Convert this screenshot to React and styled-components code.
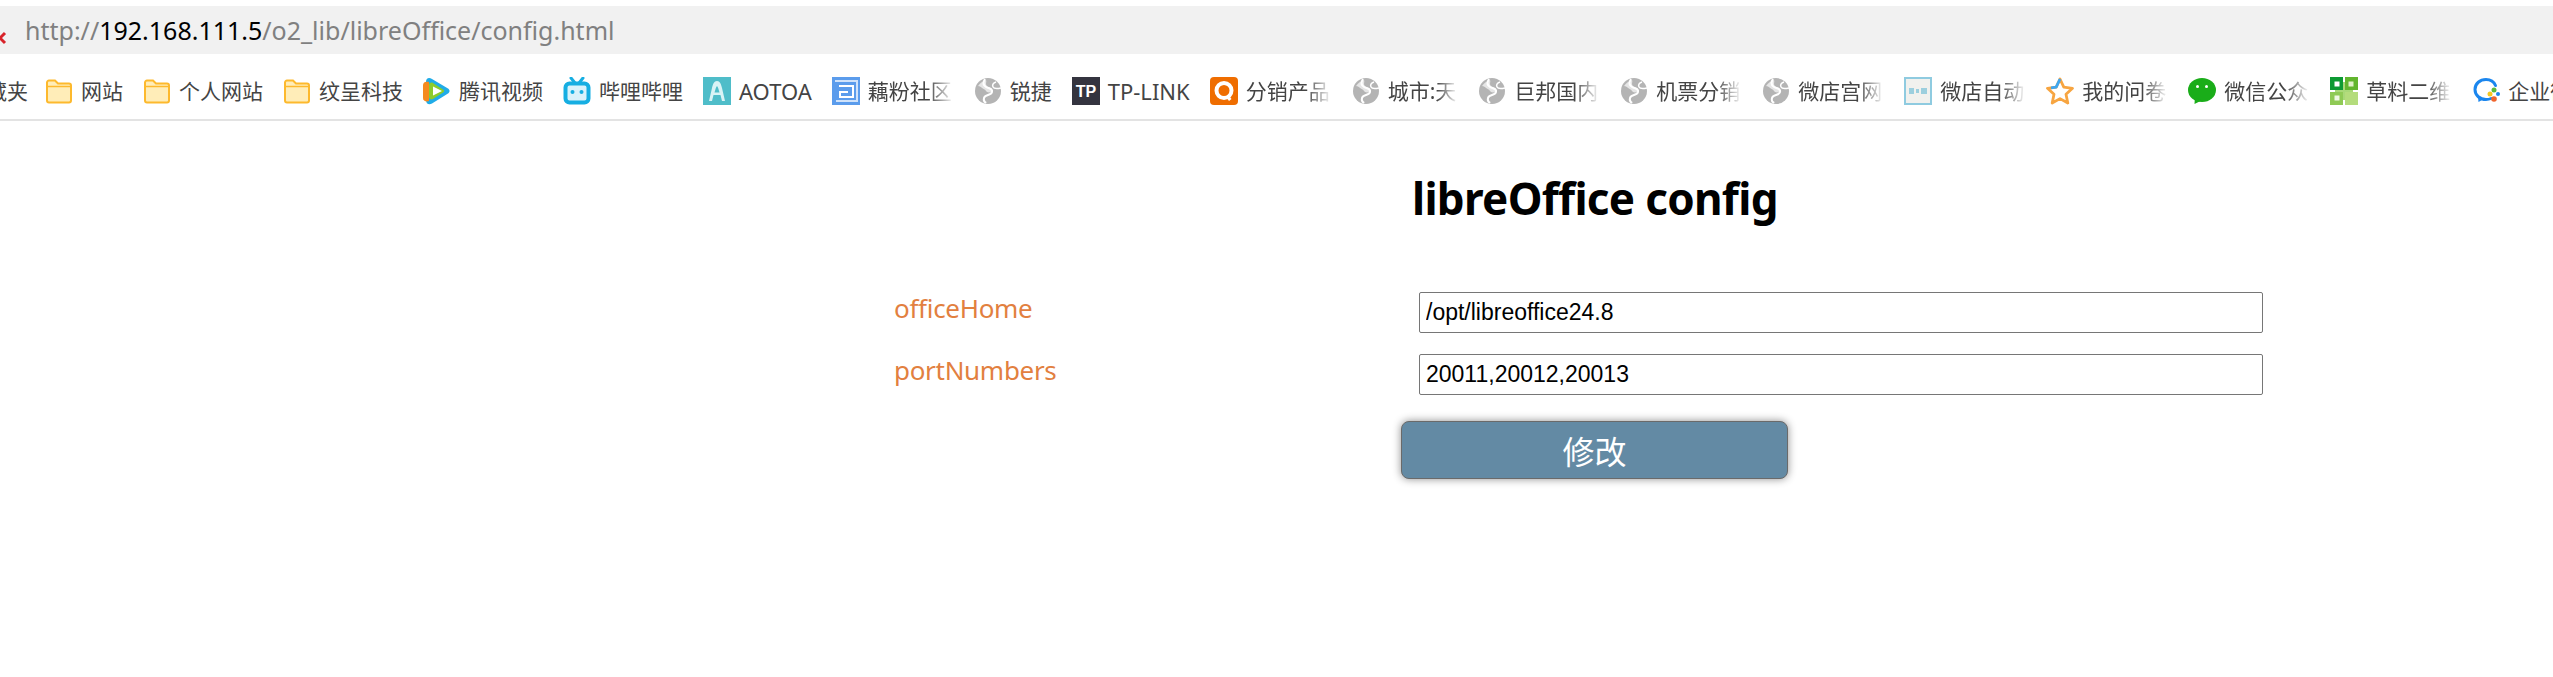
import React from 'react';
import styled, { createGlobalStyle } from 'styled-components';

const GlobalStyle = createGlobalStyle`
  html, body {
    margin: 0;
    background: #fff;
    font-family: "Noto Sans", "Noto Sans CJK SC", sans-serif;
  }
`;

const Page = styled.div`
  width: 2553px;
  height: 677px;
  overflow: hidden;
  padding-top: 6px;
  box-sizing: border-box;
`;

const UrlBar = styled.div`
  display: flex;
  align-items: center;
  height: 48px;
  background: #f1f1f1;
  overflow: hidden;
  font-size: 25px;
  color: #808080;
`;

const InsecureMark = styled.svg`
  width: 16px;
  height: 16px;
  margin: 16px 17px 0 -8px;
  flex: none;
`;

const Host = styled.span`
  color: #000;
`;

const BookmarkBar = styled.div`
  display: flex;
  align-items: center;
  gap: 20px;
  height: 67px;
  padding-top: 9px;
  box-sizing: border-box;
  border-bottom: 2px solid #e3e3e3;
  overflow: hidden;
  white-space: nowrap;
`;

const Bookmark = styled.div`
  display: flex;
  align-items: center;
  gap: 8px;
  flex: none;

  &:first-child {
    margin-left: -35px;
    margin-right: -3px;
  }
`;

const BookmarkLabel = styled.span`
  font-size: ${({ $latin }) => ($latin ? '22px' : '21px')};
  line-height: 28px;
  color: #444;
  ${({ $faded }) =>
    $faded &&
    `
    padding-right: 2px;
    -webkit-mask-image: linear-gradient(to right, #000 70%, transparent 100%);
    mask-image: linear-gradient(to right, #000 70%, transparent 100%);
  `}
`;

const IconBox = styled.svg`
  width: 28px;
  height: 28px;
  flex: none;
  display: block;
`;

const Form = styled.form`
  display: grid;
  grid-template-columns: 507px 862px;
  margin-left: 894px;
`;

const Heading = styled.h1`
  grid-column: 2;
  margin: 39px 0 56px 11px;
  font-size: 44px;
  line-height: 76px;
  font-weight: 700;
  letter-spacing: -0.7px;
  color: #000;
`;

const FieldLabel = styled.label`
  grid-column: 1;
  font-size: 26px;
  line-height: 33px;
  letter-spacing: -0.3px;
  color: #e2803f;
`;

const FieldInput = styled.input`
  grid-column: 2;
  justify-self: start;
  width: 844px;
  height: 41px;
  margin: 0 0 21px 18px;
  padding: 0 6px;
  box-sizing: border-box;
  border: 1px solid #767676;
  border-radius: 2px;
  background: #fff;
  font-family: "Liberation Sans", Arial, sans-serif;
  font-size: 23px;
  color: #000;
`;

const SubmitButton = styled.button`
  grid-column: 2;
  justify-self: start;
  width: 387px;
  height: 58px;
  margin-top: 5px;
  border: 1px solid #6a6a6a;
  border-radius: 8px;
  background: #638aa4;
  box-shadow: 0 0 8px rgba(0, 0, 0, 0.45);
  color: #fff;
  font-family: "Noto Sans CJK SC", sans-serif;
  font-size: 32px;
`;

const FolderIcon = () => (
  <IconBox viewBox="0 0 28 28">
    <path
      d="M2 5.500a2 2 0 0 1 2-2h6l3 3h11a2 2 0 0 1 2 2v15a2 2 0 0 1-2 2H4a2 2 0 0 1-2-2z"
      fill="#ffedb8"
      stroke="#fdb92d"
      strokeWidth="2"
    />
    <path d="M2 9.500h24" stroke="#fdb92d" strokeWidth="1.500" />
  </IconBox>
);

const GlobeIcon = () => (
  <IconBox viewBox="0 0 28 28">
    <circle cx="14" cy="14" r="13" fill="#b4b4b4" />
    <path
      d="M4 9c2-3 5-5 8-6 1 2-1 4 1 6s5 1 5 4-5 3-6 1-3-2-4-3-2-2-4-2z"
      fill="#e6e6e6"
    />
    <path
      d="M11 2c-2 3-2 6 1 8s7 1 6 5-7 2-8 6 1 4 2 5"
      fill="none"
      stroke="#fff"
      strokeWidth="2"
    />
    <path d="M22 5c-3 1-4 3-3 5s3 2 8 1" fill="none" stroke="#fff" strokeWidth="1.500" />
  </IconBox>
);

const TencentVideoIcon = () => (
  <IconBox viewBox="0 0 28 28">
    <path d="M3 5c0-4 3-5 6-3l16 9.500c2 1.300 2 3.700 0 5L9 26.500c-3 1.600-6 .5-6-3.500z" fill="#20ace8" />
    <path d="M0 8c0-3 3-4 6-3v19c-3 1-6 0-6-3z" fill="#f58a1f" />
    <path d="M6 8c0-2 2-3 4-2l10 6.500c1.500 1 1.500 2 0 3L10 22c-2 1-4 0-4-2z" fill="#8ccc2c" />
    <path d="M10 9.500l9 4.500-9 4.500z" fill="#fff" />
  </IconBox>
);

const BilibiliIcon = () => (
  <IconBox viewBox="0 0 28 28">
    <path d="M8 1l4 5M20 1l-4 5" stroke="#16aee2" strokeWidth="3" strokeLinecap="round" />
    <rect x="2.500" y="6.500" width="23" height="19" rx="4" fill="#d9f2fb" stroke="#16aee2" strokeWidth="4" />
    <circle cx="9.500" cy="15" r="2" fill="#16aee2" />
    <circle cx="18.500" cy="15" r="2" fill="#16aee2" />
  </IconBox>
);

const AotoaIcon = () => (
  <IconBox viewBox="0 0 28 28">
    <rect width="28" height="28" fill="#4fbdc9" />
    <path
      d="M14 4c3 0 4 3 5 7l3 13h-3l-1.500-6h-7L9 24H6l3-13c1-4 2-7 5-7zm0 5c-1 1-1.500 3-2.500 6.500h5C15.500 12 15 10 14 9z"
      fill="#d9f3f5"
    />
  </IconBox>
);

const OufenIcon = () => (
  <IconBox viewBox="0 0 28 28">
    <rect width="28" height="28" fill="#5b9cec" />
    <path d="M3 4h22v20H4" fill="none" stroke="#cfe2fa" strokeWidth="2" />
    <path d="M7 9h14v11H8v-5h8" fill="none" stroke="#fff" strokeWidth="2" />
  </IconBox>
);

const TpLinkIcon = () => (
  <IconBox viewBox="0 0 28 28">
    <rect width="28" height="28" fill="#34343f" />
    <text x="14" y="19.500" textAnchor="middle" fontFamily="Liberation Sans" fontWeight="700" fontSize="16" fill="#fff">
      TP
    </text>
  </IconBox>
);

const OrangeQIcon = () => (
  <IconBox viewBox="0 0 28 28">
    <rect width="28" height="28" rx="4" fill="#ef6d00" />
    <circle cx="14" cy="13.500" r="7.500" fill="#ef6d00" stroke="#fff" strokeWidth="4" />
    <path d="M16 20l3 4 2.500-2-2.500-3z" fill="#fff" />
  </IconBox>
);

const ShopIcon = () => (
  <IconBox viewBox="0 0 28 28">
    <rect x="1" y="1" width="26" height="26" fill="#f1f1ee" stroke="#8fcbe0" strokeWidth="2" />
    <path
      d="M5 11h5v6H5zM12 12h3v4h-3zM17 11h6v6h-6z"
      fill="#7fc3d8"
      opacity="0.75"
    />
  </IconBox>
);

const StarIcon = () => (
  <IconBox viewBox="0 0 28 28">
    <path
      d="M14 2l3.800 8.200 8.700 1.100-6.500 6 1.800 8.700L14 21.600 6.200 26l1.800-8.700-6.500-6 8.700-1.100z"
      fill="#fff"
      stroke="#f7a541"
      strokeWidth="2.800"
      strokeLinejoin="round"
    />
    <path d="M14 2l-3.800 8.200-5.200.6" fill="none" stroke="#3ea6f0" strokeWidth="2.800" strokeLinejoin="round" />
  </IconBox>
);

const WechatIcon = () => (
  <IconBox viewBox="0 0 28 28">
    <ellipse cx="14" cy="13" rx="14" ry="12" fill="#1aad19" />
    <path d="M7 20l-.5 7 7-3.500z" fill="#1aad19" />
    <circle cx="9.500" cy="9.500" r="1.500" fill="#fff" />
    <circle cx="18.500" cy="9.500" r="1.500" fill="#fff" />
  </IconBox>
);

const CaoliaoIcon = () => (
  <IconBox viewBox="0 0 28 28">
    <rect width="13" height="13" fill="#0d9a33" />
    <rect x="15" width="13" height="13" fill="#62b52e" />
    <rect y="15" width="13" height="13" fill="#8fca55" />
    <rect x="15" y="15" width="13" height="13" fill="#b4dc7c" />
    <rect x="13" y="5" width="2" height="18" fill="#a8d878" />
    <rect x="5" y="13" width="18" height="2" fill="#a8d878" />
    <rect x="4.500" y="4.500" width="5" height="5" fill="#fff" />
    <rect x="18.500" y="4.500" width="5" height="5" fill="#dff0c8" />
    <rect x="4.500" y="18.500" width="5" height="5" fill="#f0f8e4" />
  </IconBox>
);

const EnterpriseIcon = () => (
  <IconBox viewBox="0 0 28 28">
    <path
      d="M19 21.500c-1.500.7-3 1-5 1-6 0-11-4-11-10S8 2.500 14 2.500c4.500 0 8 2.500 9.500 6"
      fill="none"
      stroke="#1b86ee"
      strokeWidth="3"
      strokeLinecap="round"
    />
    <path d="M6 20l.5 5 4.500-2.500z" fill="#1b86ee" />
    <circle cx="22" cy="13" r="2.500" fill="#5cbb3c" />
    <circle cx="26" cy="17" r="2" fill="#1b86ee" />
    <circle cx="18" cy="17" r="2.500" fill="#f6c71f" />
    <circle cx="22" cy="22" r="2.800" fill="#f0642d" />
  </IconBox>
);

const bookmarks = [
  { label: '收藏夹' },
  { label: '网站', Icon: FolderIcon },
  { label: '个人网站', Icon: FolderIcon },
  { label: '纹呈科技', Icon: FolderIcon },
  { label: '腾讯视频', Icon: TencentVideoIcon },
  { label: '哔哩哔哩', Icon: BilibiliIcon },
  { label: 'AOTOA', Icon: AotoaIcon, latin: true },
  { label: '藕粉社区', Icon: OufenIcon, faded: true },
  { label: '锐捷', Icon: GlobeIcon },
  { label: 'TP-LINK', Icon: TpLinkIcon, latin: true },
  { label: '分销产品', Icon: OrangeQIcon, faded: true },
  { label: '城市:天', Icon: GlobeIcon, faded: true },
  { label: '巨邦国内', Icon: GlobeIcon, faded: true },
  { label: '机票分销', Icon: GlobeIcon, faded: true },
  { label: '微店宫网', Icon: GlobeIcon, faded: true },
  { label: '微店自动', Icon: ShopIcon, faded: true },
  { label: '我的问卷', Icon: StarIcon, faded: true },
  { label: '微信公众', Icon: WechatIcon, faded: true },
  { label: '草料二维', Icon: CaoliaoIcon, faded: true },
  { label: '企业微信', Icon: EnterpriseIcon },
];

const App = () => (
  <Page>
    <GlobalStyle />
    <UrlBar>
      <InsecureMark viewBox="0 0 16 16">
        <path d="M3 3l10 10M13 3L3 13" stroke="#d8232a" strokeWidth="3" />
      </InsecureMark>
      <span>
        http://<Host>192.168.111.5</Host>/o2_lib/libreOffice/config.html
      </span>
    </UrlBar>
    <BookmarkBar>
      {bookmarks.map(({ label, Icon, faded, latin }) => (
        <Bookmark key={label}>
          {Icon && <Icon />}
          <BookmarkLabel $faded={faded} $latin={latin}>{label}</BookmarkLabel>
        </Bookmark>
      ))}
    </BookmarkBar>
    <Form onSubmit={(e) => e.preventDefault()}>
      <Heading>libreOffice config</Heading>
      <FieldLabel htmlFor="officeHome">officeHome</FieldLabel>
      <FieldInput id="officeHome" defaultValue="/opt/libreoffice24.8" />
      <FieldLabel htmlFor="portNumbers">portNumbers</FieldLabel>
      <FieldInput id="portNumbers" defaultValue="20011,20012,20013" />
      <SubmitButton type="submit">修改</SubmitButton>
    </Form>
  </Page>
);

export default App;
